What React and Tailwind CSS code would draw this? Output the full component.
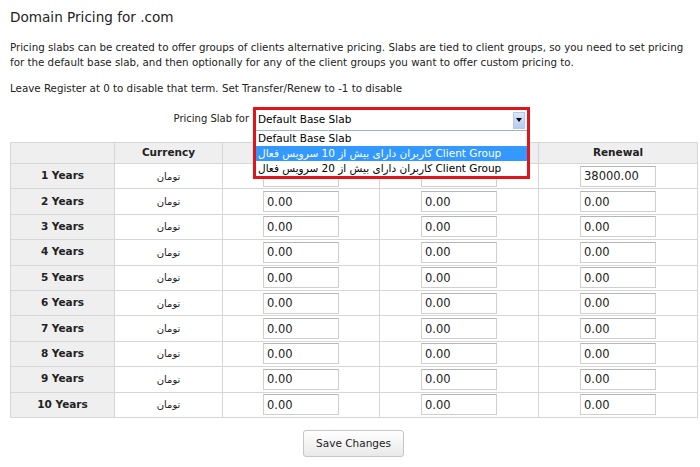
import React from "react";

const years = [1, 2, 3, 4, 5, 6, 7, 8, 9, 10];
const groupA = "کاربران دارای بیش از 10 سرویس فعال Client Group";
const groupB = "کاربران دارای بیش از 20 سرویس فعال Client Group";

function PriceInput({ value }) {
  return (
    <input
      defaultValue={value}
      className="w-[76px] h-[21px] border border-[#cfcfcf] border-t-[#b5b5b5] bg-white px-[3px] text-[11.5px] text-[#222] outline-none font-['DejaVu_Sans',sans-serif]"
    />
  );
}

function SlabSelect() {
  return (
    <div className="relative w-[277px] h-[23px]">
      <div className="absolute left-0 top-0 z-10 w-[277px] border-[3px] border-[#e1141c] bg-white">
        <div className="h-[21px] flex items-center justify-between border-b border-[#9fb4cf] pl-[2px] pr-[2px]">
          <span className="text-[10.5px] text-black">Default Base Slab</span>
          <span className="w-[12px] h-[17px] flex items-center justify-center bg-gradient-to-b from-[#dbe6f8] to-[#b6cbef] border border-[#b8c9e6]">
            <span className="w-0 h-0 border-l-[3.5px] border-r-[3.5px] border-t-[4px] border-l-transparent border-r-transparent border-t-black" />
          </span>
        </div>
        <div className="text-[10.5px] text-black">
          <div className="h-[15px] leading-[15px] pl-[2px]">Default Base Slab</div>
          <div className="h-[15px] leading-[15px] pl-[2px] bg-[#3399ff] text-white">{groupA}</div>
          <div className="h-[15px] leading-[15px] pl-[2px]">{groupB}</div>
        </div>
      </div>
    </div>
  );
}

export default function App() {
  return (
    <div className="w-[700px] h-[467px] bg-white text-[#222] font-['DejaVu_Sans',sans-serif] text-[10.3px] overflow-hidden">
      <div className="pt-[8px] pl-[10px] text-[13.6px] leading-[18px] text-[#222]">Domain Pricing for .com</div>

      <p className="mt-[14px] pl-[10px] pr-[10px] leading-[15px]">
        Pricing slabs can be created to offer groups of clients alternative pricing. Slabs are tied to client groups, so you need to set pricing for the default base slab, and then optionally for any of the client groups you want to offer custom pricing to.
      </p>
      <p className="mt-[11px] pl-[10px] leading-[15px]">Leave Register at 0 to disable that term. Set Transfer/Renew to -1 to disable</p>

      <div className="mt-[11px] flex items-center h-[23px]">
        <div className="w-[253px] text-right pr-[4px] text-[10px]">Pricing Slab for</div>
        <SlabSelect />
      </div>

      <table className="mt-[12px] ml-[10px] w-[687px] border-collapse table-fixed">
        <colgroup>
          <col className="w-[104px]" />
          <col className="w-[108px]" />
          <col className="w-[157px]" />
          <col className="w-[159px]" />
          <col className="w-[159px]" />
        </colgroup>
        <thead>
          <tr className="h-[21px] bg-[#efefef]">
            <th className="border border-[#d6d6d6]"></th>
            <th className="border border-[#d6d6d6] font-bold text-[10.5px]">Currency</th>
            <th className="border border-[#d6d6d6]"></th>
            <th className="border border-[#d6d6d6]"></th>
            <th className="border border-[#d6d6d6] font-bold text-[10.5px]">Renewal</th>
          </tr>
        </thead>
        <tbody>
          {years.map((y) => (
            <tr key={y} className="h-[25.4px]">
              <td className="border border-[#d6d6d6] bg-[#efefef] text-center font-bold text-[10.5px]">{y} Years</td>
              <td className="border border-[#d6d6d6] text-center text-[10px]">تومان</td>
              <td className="border border-[#d6d6d6] text-center">
                <PriceInput value={y === 1 ? "" : "0.00"} />
              </td>
              <td className="border border-[#d6d6d6] text-center">
                <PriceInput value={y === 1 ? "" : "0.00"} />
              </td>
              <td className="border border-[#d6d6d6] text-center">
                <PriceInput value={y === 1 ? "38000.00" : "0.00"} />
              </td>
            </tr>
          ))}
        </tbody>
      </table>

      <div className="ml-[10px] w-[687px] mt-[12px] flex justify-center">
        <button className="w-[101px] h-[27px] rounded-[3px] border border-[#c6c6c6] bg-gradient-to-b from-white to-[#e9e9e9] text-[10.5px] text-[#222]">
          Save Changes
        </button>
      </div>
    </div>
  );
}
